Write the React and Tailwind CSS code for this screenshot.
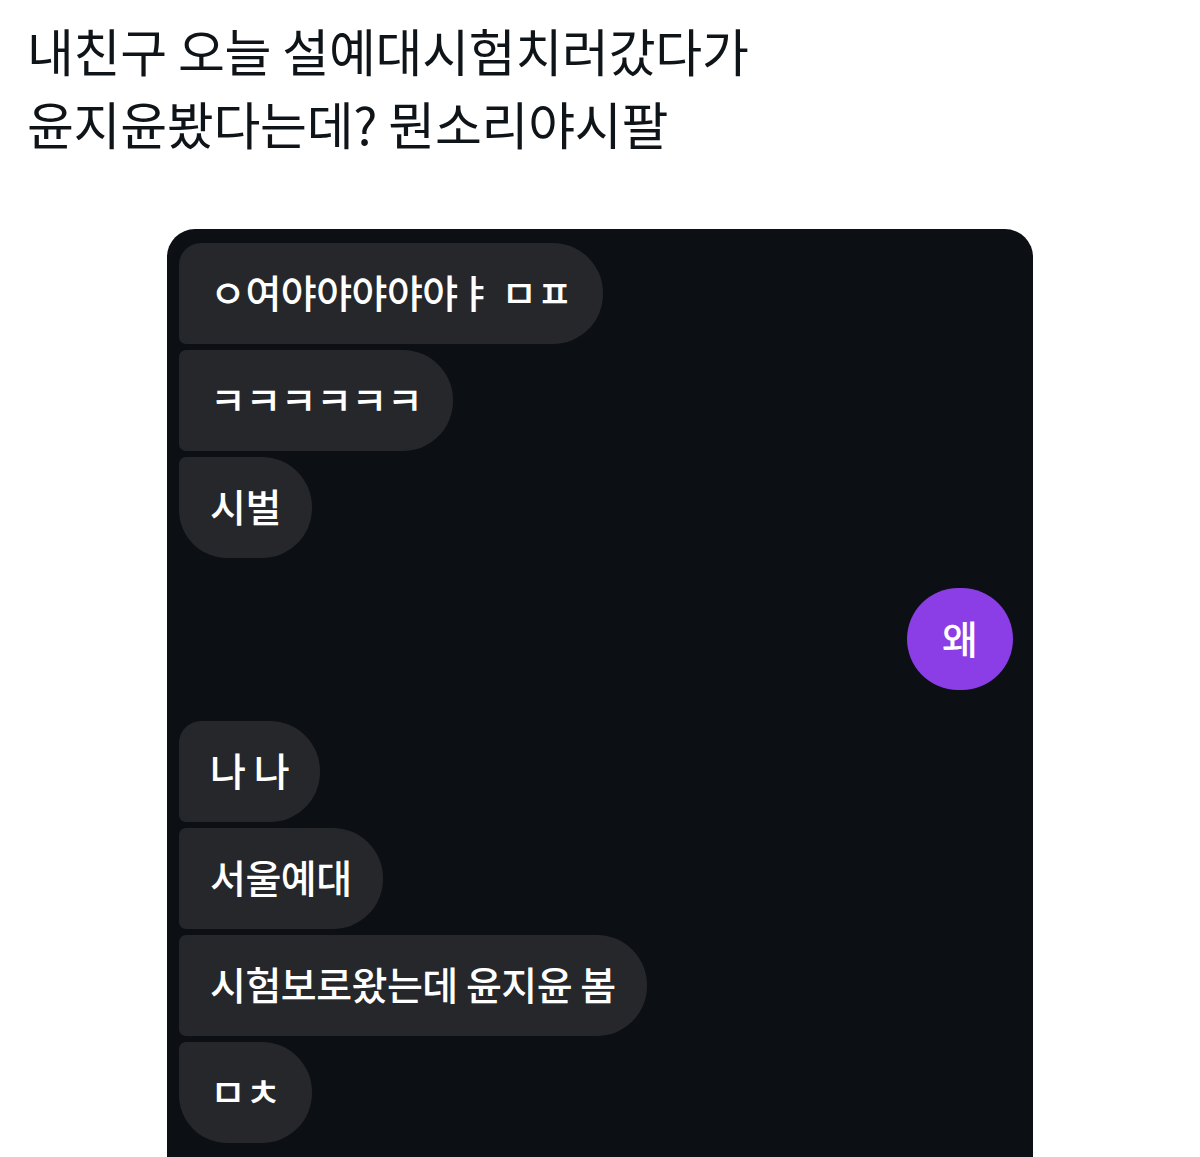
const font = { fontFamily: '"Noto Sans CJK KR", "Noto Sans", sans-serif' };

// left-side bubbles, grouped like the DM thread
const groups = [
  ['ㅇ여야야야야야ㅑ ㅁㅍ', 'ㅋㅋㅋㅋㅋㅋ', '시벌'],
  ['나 나', '서울예대', '시험보로왔는데 윤지윤 봄', 'ㅁㅊ'],
];

function Bubble({ text, pos, total }) {
  const first = pos === 0;
  const last = pos === total - 1;
  return (
    <div
      className={`h-[101px] flex items-center self-start bg-[#25272b] pl-[31px] pr-[31px] pb-[4px] rounded-r-[50px] ${
        first ? 'rounded-tl-[22px]' : 'rounded-tl-[7px]'
      } ${last ? 'rounded-bl-[48px]' : 'rounded-bl-[7px]'}`}
    >
      <span className="text-[39px] font-medium text-white tracking-[-0.5px] leading-none">{text}</span>
    </div>
  );
}

function Group({ items }) {
  return (
    <div className="flex flex-col gap-[6px]">
      {items.map((t, i) => (
        <Bubble key={i} text={t} pos={i} total={items.length} />
      ))}
    </div>
  );
}

export default function App() {
  return (
    <div className="w-[1200px] h-[1157px] overflow-hidden bg-white flex flex-col" style={font}>
      {/* Tweet text */}
      <div className="pl-[27px] pt-[14px] text-[51px] leading-[73px] text-[#0f1419] tracking-[-0.3px]">
        <div>내친구 오늘 설예대시험치러갔다가</div>
        <div>윤지윤봤다는데? 뭔소리야시팔</div>
      </div>

      {/* Screenshot of chat */}
      <div className="mt-[69px] mx-auto w-[866px] flex-1 bg-[#0c0f14] rounded-t-[28px] pt-[14px] pl-[12px] pr-[20px] flex flex-col">
        <Group items={groups[0]} />
        <div className="flex justify-end mt-[30px]">
          <div className="w-[106px] h-[102px] rounded-full bg-[#8b3de6] flex items-center justify-center pb-[4px]">
            <span className="text-[39px] font-medium text-white leading-none">왜</span>
          </div>
        </div>
        <div className="mt-[31px]">
          <Group items={groups[1]} />
        </div>
      </div>
    </div>
  );
}
